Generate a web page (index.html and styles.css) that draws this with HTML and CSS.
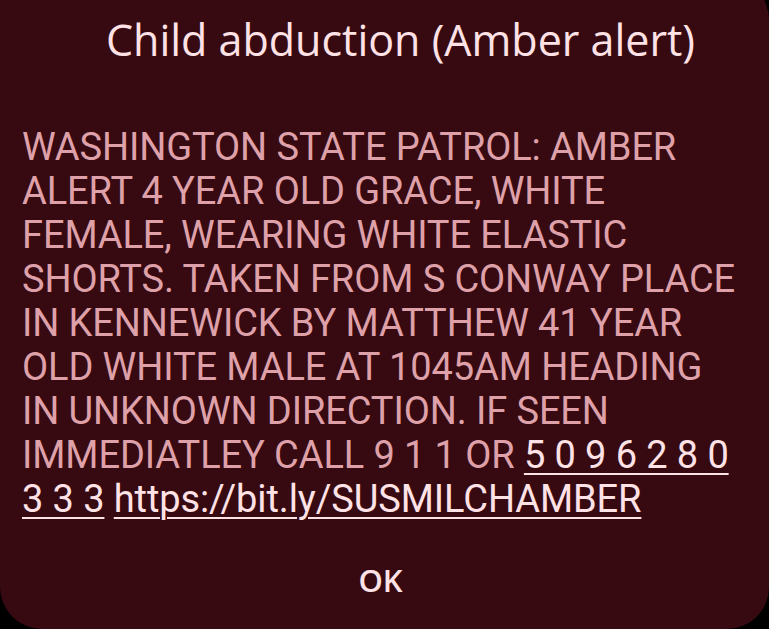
FILE: index.html
```html
<!DOCTYPE html>
<html lang="en">
<head>
  <meta charset="UTF-8">
  <meta name="viewport" content="width=device-width, initial-scale=1.0">
  <link rel="stylesheet" href="styles.css">
  <title>Amber alert</title>
</head>
<body>

  <div class="dialog">
    <h1 class="dialog-title">Child abduction (Amber alert)</h1>

    <p class="dialog-message">
      WASHINGTON STATE PATROL: AMBER ALERT 4 YEAR OLD GRACE, WHITE FEMALE, WEARING WHITE ELASTIC SHORTS. TAKEN FROM S CONWAY PLACE IN KENNEWICK BY MATTHEW 41 YEAR OLD WHITE MALE AT 1045AM HEADING IN UNKNOWN DIRECTION. IF SEEN IMMEDIATLEY CALL 9 1 1 OR <a href="#">5 0 9 6 2 8 0 3 3 3</a> <a href="#">https://bit.ly/SUSMILCHAMBER</a>
    </p>

    <div class="dialog-actions">
      <button class="btn-ok">OK</button>
    </div>
  </div>

</body>
</html>
```

FILE: styles.css
```css
html, body {
  margin: 0;
  height: 100%;
  background-color: #000000;
  overflow: hidden;
}

.dialog {
  margin-top: -24px;
  height: 653px;
  box-sizing: border-box;
  padding: 34px 24px 0 22px;
  background-color: #370a12;
  border-radius: 0 44px 42px 42px;
  display: flex;
  flex-direction: column;
}

.dialog-title {
  margin: 0;
  padding-left: 34px;
  text-align: center;
  font-family: "Open Sans", sans-serif;
  font-weight: 400;
  font-size: 43px;
  color: #ffe2e6;
}

.dialog-message {
  margin: 56px 0 0 0;
  font-family: Roboto, sans-serif;
  font-size: 38px;
  line-height: 44px;
  letter-spacing: -0.1px;
  color: #dfa1a9;
}

.dialog-message a {
  color: #ffe2e6;
  text-decoration: underline;
  text-decoration-thickness: 2px;
  text-underline-offset: 5px;
}

.dialog-actions {
  display: flex;
  justify-content: center;
  margin-top: 30px;
  padding-right: 6px;
}

.btn-ok {
  background: none;
  border: none;
  padding: 8px 24px;
  font-family: "Open Sans", sans-serif;
  font-size: 31px;
  font-weight: 600;
  color: #ffe2e6;
  cursor: pointer;
}
```
